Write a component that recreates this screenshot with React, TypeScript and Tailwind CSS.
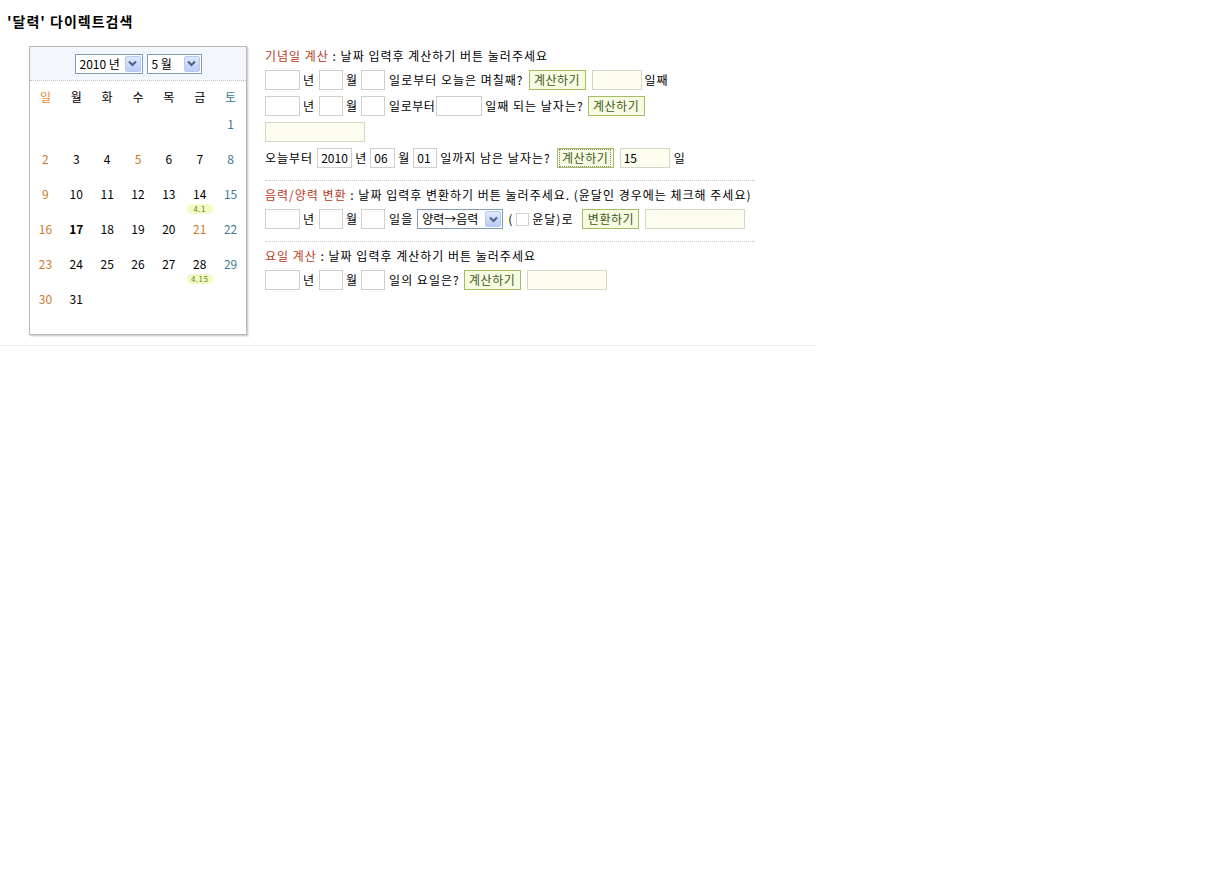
import React from "react";

const font = { fontFamily: '"Noto Sans CJK KR", "Noto Sans", sans-serif' };

const dayNames = ["일", "월", "화", "수", "목", "금", "토"];
const holidays = [5, 21];
const lunar: Record<number, string> = { 14: "4.1", 28: "4.15" };

// May 2010 starts on a Saturday
function buildWeeks() {
  const cells: (number | null)[] = Array(6).fill(null);
  for (let d = 1; d <= 31; d++) cells.push(d);
  while (cells.length % 7) cells.push(null);
  const weeks: (number | null)[][] = [];
  for (let i = 0; i < cells.length; i += 7) weeks.push(cells.slice(i, i + 7));
  return weeks;
}

function Arrow() {
  return (
    <span className="ml-auto mr-px flex h-[16px] w-[16px] items-center justify-center rounded-[2px] border border-[#b7c9ef] bg-gradient-to-b from-[#dfe8fd] to-[#b9cdf7]">
      <svg width="9" height="7" viewBox="0 0 9 7">
        <path d="M1 1.5 L4.5 5 L8 1.5" fill="none" stroke="#4a5f8c" strokeWidth="2" />
      </svg>
    </span>
  );
}

function Select({ label, w }: { label: string; w: string }) {
  return (
    <div className={`flex h-[20px] items-center border border-[#7f9db9] bg-white tracking-normal ${w}`}>
      <span className="pl-[4px] text-[12px] leading-none text-black">{label}</span>
      <Arrow />
    </div>
  );
}

function Field({ w, value, tint }: { w: string; value?: string; tint?: boolean }) {
  return (
    <span
      className={`inline-flex h-[20px] shrink-0 items-center border pl-[3px] text-[12px] leading-none tracking-normal text-black ${w} ${
        tint ? "border-[#d6d6c6] bg-[#fdfdf0]" : "border-[#cfcfcf] bg-white"
      }`}
    >
      {value}
    </span>
  );
}

function Btn({ label, focus }: { label: string; focus?: boolean }) {
  return (
    <span className="inline-flex h-[20px] w-[57px] shrink-0 items-center justify-center border border-[#a3bd66] bg-[#f6fbe1] text-[12px] leading-none tracking-[0.5px] text-[#3d5a22]">
      <span className={`px-[2px] py-[2px] ${focus ? "outline outline-1 outline-dotted outline-[#8a8a8a]" : ""}`}>{label}</span>
    </span>
  );
}

function Ymd() {
  return (
    <>
      <Field w="w-[35px]" />
      <span className="ml-[3px]">년</span>
      <span className="ml-[4px]" />
      <Field w="w-[24px]" />
      <span className="ml-[3px]">월</span>
      <span className="ml-[3px]" />
      <Field w="w-[24px]" />
    </>
  );
}

function Calendar() {
  const weeks = buildWeeks();
  return (
    <div className="h-[289px] w-[218px] shrink-0 border border-[#b9b9b9] bg-white shadow-[1px_1px_0_#d4d4d4,2px_2px_1px_#ececec]">
      <div className="flex h-[34px] items-center justify-center gap-[4px] border-b border-dotted border-[#c4c4c4] bg-[#f4f6fd]">
        <Select label="2010 년" w="w-[68px]" />
        <Select label="5 월" w="w-[55px]" />
      </div>
      <div className="grid h-[31px] grid-cols-7 items-center text-center text-[12px]">
        {dayNames.map((d, i) => (
          <span key={d} className={i === 0 ? "text-[#e0892b]" : i === 6 ? "text-[#3b7c94]" : "text-black"}>
            {d}
          </span>
        ))}
      </div>
      {weeks.map((week, wi) => (
        <div key={wi} className="grid h-[35px] grid-cols-7 text-center text-[12px]">
          {week.map((d, i) => {
            if (d === null) return <span key={i} />;
            const color =
              i === 0 || holidays.includes(d) ? "text-[#c97a2e]" : i === 6 ? "text-[#3b7c94]" : "text-black";
            return (
              <div key={i} className="flex flex-col items-center pt-[5px]">
                <span className={`leading-[14px] ${color} ${d === 17 ? "font-bold" : ""}`}>{d}</span>
                {lunar[d] && (
                  <span className="mt-[3px] w-[26px] rounded-full bg-[#f4f9c6] text-center text-[8px] leading-[10px] tracking-[0.5px] text-[#5f8a1c]">
                    {lunar[d]}
                  </span>
                )}
              </div>
            );
          })}
        </div>
      ))}
    </div>
  );
}

function Heading({ label, children }: { label: string; children: React.ReactNode }) {
  return (
    <div className="flex h-[20px] items-center whitespace-pre">
      <span className="text-[#b83a1c]">{label}</span>
      <span> : {children}</span>
    </div>
  );
}

export default function App() {
  return (
    <div className="min-h-[895px] bg-white text-[12px] text-black" style={font}>
      <div className="w-[817px] border-b border-[#ebebeb] pb-[10px]">
        <h1 className="h-[46px] pl-[7px] pt-[13px] text-[14px] font-bold leading-[16px] tracking-[1px] text-black">
          '달력' 다이렉트검색
        </h1>
        <div className="flex pl-[29px]">
          <Calendar />
          <div className="ml-[18px] w-[490px] whitespace-nowrap tracking-[1px]">
            <Heading label="기념일 계산">날짜 입력후 계산하기 버튼 눌러주세요</Heading>
            <div className="mt-px flex h-[26px] items-center">
              <Ymd />
              <span className="ml-[4px]">일로부터 오늘은 며칠째?</span>
              <span className="ml-[5px]" />
              <Btn label="계산하기" />
              <span className="ml-[6px]" />
              <Field w="w-[50px]" tint />
              <span className="ml-[3px]">일째</span>
            </div>
            <div className="flex h-[26px] items-center">
              <Ymd />
              <span className="ml-[4px] tracking-[0.5px]">일로부터</span>
              <span className="ml-[1px]" />
              <Field w="w-[46px]" />
              <span className="ml-[3px]">일째 되는 날자는?</span>
              <span className="ml-[4px]" />
              <Btn label="계산하기" />
            </div>
            <div className="flex h-[26px] items-center">
              <Field w="w-[100px]" tint />
            </div>
            <div className="flex h-[26px] items-center">
              <span>오늘부터</span>
              <span className="ml-[4px]" />
              <Field w="w-[35px]" value="2010" />
              <span className="ml-[3px]">년</span>
              <span className="ml-[3px]" />
              <Field w="w-[25px]" value="06" />
              <span className="ml-[3px]">월</span>
              <span className="ml-[3px]" />
              <Field w="w-[24px]" value="01" />
              <span className="ml-[3px]">일까지 남은 날자는?</span>
              <span className="ml-[6px]" />
              <Btn label="계산하기" focus />
              <span className="ml-[6px]" />
              <Field w="w-[50px]" value="15" tint />
              <span className="ml-[4px]">일</span>
            </div>

            <div className="mt-[9px] border-t border-dotted border-[#c8c8c8]" />
            <div className="mt-[4px]">
              <Heading label="음력/양력 변환">날짜 입력후 변환하기 버튼 눌러주세요. (윤달인 경우에는 체크해 주세요)</Heading>
            </div>
            <div className="mt-[2px] flex h-[24px] items-center">
              <Ymd />
              <span className="ml-[4px]">일을</span>
              <span className="ml-[4px]" />
              <Select label="양력→음력" w="w-[86px]" />
              <span className="ml-[5px]">(</span>
              <span className="ml-[3px] h-[13px] w-[13px] border border-[#d0d0d0] bg-white" />
              <span className="ml-[3px]">윤달)로</span>
              <span className="ml-[9px]" />
              <Btn label="변환하기" />
              <span className="ml-[6px]" />
              <Field w="w-[100px]" tint />
            </div>

            <div className="mt-[10px] border-t border-dotted border-[#c8c8c8]" />
            <div className="mt-[4px]">
              <Heading label="요일 계산">날짜 입력후 계산하기 버튼 눌러주세요</Heading>
            </div>
            <div className="mt-[2px] flex h-[24px] items-center">
              <Ymd />
              <span className="ml-[4px]">일의 요일은?</span>
              <span className="ml-[4px]" />
              <Btn label="계산하기" />
              <span className="ml-[6px]" />
              <Field w="w-[80px]" tint />
            </div>
          </div>
        </div>
      </div>
    </div>
  );
}
